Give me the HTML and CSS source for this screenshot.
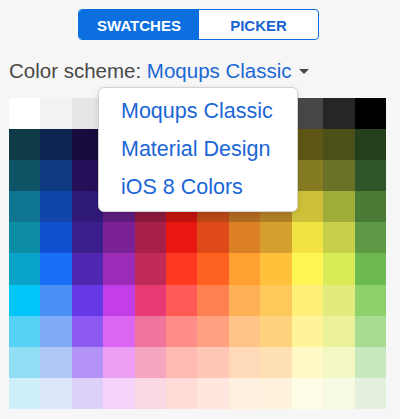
FILE: index.html
```html
<!DOCTYPE html>
<html>
<head>
<meta charset="utf-8">
<link rel="stylesheet" href="styles.css">
</head>
<body>
<div class="panel">
  <div class="toggle-row">
    <div class="toggle">
      <span class="seg active">SWATCHES</span>
      <span class="seg">PICKER</span>
    </div>
  </div>
  <div class="scheme">Color scheme: <span class="link">Moqups Classic</span><span class="caret"></span></div>
  <div class="grid">
    <i style="background:#ffffff"></i><i style="background:#f2f2f2"></i><i style="background:#e6e6e6"></i><i style="background:#cccccc"></i><i style="background:#b3b3b3"></i><i style="background:#999999"></i><i style="background:#808080"></i><i style="background:#666666"></i><i style="background:#555555"></i><i style="background:#474747"></i><i style="background:#262626"></i><i style="background:#000000"></i>
    <i style="background:#0f3a48"></i><i style="background:#0c2550"></i><i style="background:#170b3c"></i><i style="background:#2a0e42"></i><i style="background:#3f0b20"></i><i style="background:#4a0808"></i><i style="background:#4a1a08"></i><i style="background:#4a2c0a"></i><i style="background:#4a3810"></i><i style="background:#5d5614"></i><i style="background:#4a5018"></i><i style="background:#23401a"></i>
    <i style="background:#0d5566"></i><i style="background:#0d3a80"></i><i style="background:#241058"></i><i style="background:#4a1560"></i><i style="background:#651230"></i><i style="background:#850c0c"></i><i style="background:#85300f"></i><i style="background:#804c15"></i><i style="background:#805a1a"></i><i style="background:#857c22"></i><i style="background:#6b7228"></i><i style="background:#2e5528"></i>
    <i style="background:#0f7590"></i><i style="background:#0f46a8"></i><i style="background:#2f1a78"></i><i style="background:#5e1e80"></i><i style="background:#8c1a3e"></i><i style="background:#c01410"></i><i style="background:#b84818"></i><i style="background:#b06a20"></i><i style="background:#b08025"></i><i style="background:#cfc03a"></i><i style="background:#a0ac38"></i><i style="background:#4a7a35"></i>
    <i style="background:#0c8ca5"></i><i style="background:#0e50d0"></i><i style="background:#3a1f8c"></i><i style="background:#7a2196"></i><i style="background:#a8214a"></i><i style="background:#e8170f"></i><i style="background:#de4a18"></i><i style="background:#dc8028"></i><i style="background:#d4a030"></i><i style="background:#f2e244"></i><i style="background:#c8d04a"></i><i style="background:#5e9a45"></i>
    <i style="background:#0aa4c8"></i><i style="background:#1a6ef8"></i><i style="background:#4f27b0"></i><i style="background:#9c2cb8"></i><i style="background:#c02a58"></i><i style="background:#ff3822"></i><i style="background:#ff6120"></i><i style="background:#ffa030"></i><i style="background:#ffc23a"></i><i style="background:#fff555"></i><i style="background:#d8ea55"></i><i style="background:#6cba50"></i>
    <i style="background:#00c6f7"></i><i style="background:#4a90f5"></i><i style="background:#6638e6"></i><i style="background:#c43ee8"></i><i style="background:#e83a75"></i><i style="background:#ff5a55"></i><i style="background:#ff8050"></i><i style="background:#ffb055"></i><i style="background:#ffc85a"></i><i style="background:#fff07a"></i><i style="background:#e2ec7e"></i><i style="background:#8ed06a"></i>
    <i style="background:#55d2f5"></i><i style="background:#80acf5"></i><i style="background:#8c5af0"></i><i style="background:#dc66f2"></i><i style="background:#f0759c"></i><i style="background:#ff8c86"></i><i style="background:#ffa080"></i><i style="background:#ffc488"></i><i style="background:#ffd27e"></i><i style="background:#fff49a"></i><i style="background:#ecf29a"></i><i style="background:#a8dc90"></i>
    <i style="background:#92def5"></i><i style="background:#afc8f7"></i><i style="background:#b393f5"></i><i style="background:#ec9ff5"></i><i style="background:#f6a5be"></i><i style="background:#ffbab2"></i><i style="background:#ffc8b6"></i><i style="background:#ffdab8"></i><i style="background:#ffe0b2"></i><i style="background:#fffac5"></i><i style="background:#f2f7c4"></i><i style="background:#c8e8bd"></i>
    <i style="background:#cdf0fb"></i><i style="background:#dce7fb"></i><i style="background:#ddd1fa"></i><i style="background:#f5d3fb"></i><i style="background:#fbd9e4"></i><i style="background:#ffdcd8"></i><i style="background:#ffe7df"></i><i style="background:#ffefdf"></i><i style="background:#fff2dd"></i><i style="background:#fffde6"></i><i style="background:#f7fae2"></i><i style="background:#e2f0dd"></i>
  </div>
  <div class="menu">
    <div class="item">Moqups Classic</div>
    <div class="item">Material Design</div>
    <div class="item">iOS 8 Colors</div>
  </div>
</div>
</body>
</html>
```

FILE: styles.css
```css
html, body {
  margin: 0;
  padding: 0;
  background: #f6f6f6;
}
body {
  font-family: "Liberation Sans", Arial, Helvetica, sans-serif;
  width: 400px;
  height: 419px;
  overflow: hidden;
}
.panel {
  position: relative;
  width: 400px;
  height: 419px;
}
.toggle-row {
  padding-top: 9px;
  padding-left: 78px;
  display: flex;
}
.toggle {
  display: flex;
  border: 1px solid #0b6fe0;
  border-radius: 4px;
  overflow: hidden;
  background: #ffffff;
}
.seg {
  width: 119px;
  height: 29px;
  display: flex;
  align-items: center;
  justify-content: center;
  padding-top: 1px;
  box-sizing: border-box;
  font-size: 15px;
  font-weight: bold;
  color: #1a63d2;
}
.seg.active {
  width: 120px;
  background: #0b6fe0;
  color: #ffffff;
}
.scheme {
  margin-top: 19px;
  padding-left: 9px;
  font-size: 20.5px;
  line-height: 24px;
  color: #484848;
  white-space: nowrap;
}
.link {
  color: #1a66d6;
}
.caret {
  display: inline-block;
  width: 0;
  height: 0;
  margin-left: 7px;
  border-left: 5px solid transparent;
  border-right: 5px solid transparent;
  border-top: 5px solid #474747;
  vertical-align: 4px;
}
.grid {
  margin-top: 15px;
  margin-left: 9px;
  width: 377px;
  display: grid;
  grid-template-columns: repeat(12, 1fr);
  grid-auto-rows: 31.1px;
}
.grid i {
  display: block;
}
.menu {
  position: absolute;
  left: 98px;
  top: 87px;
  width: 200px;
  height: 125px;
  padding-top: 4px;
  box-sizing: border-box;
  background: #ffffff;
  border: 1px solid #d2d2d2;
  border-radius: 6px;
  box-shadow: 0 2px 6px rgba(0, 0, 0, 0.12);
}
.item {
  padding-left: 22px;
  font-size: 21.5px;
  line-height: 38px;
  color: #1a66d6;
  white-space: nowrap;
}
```
